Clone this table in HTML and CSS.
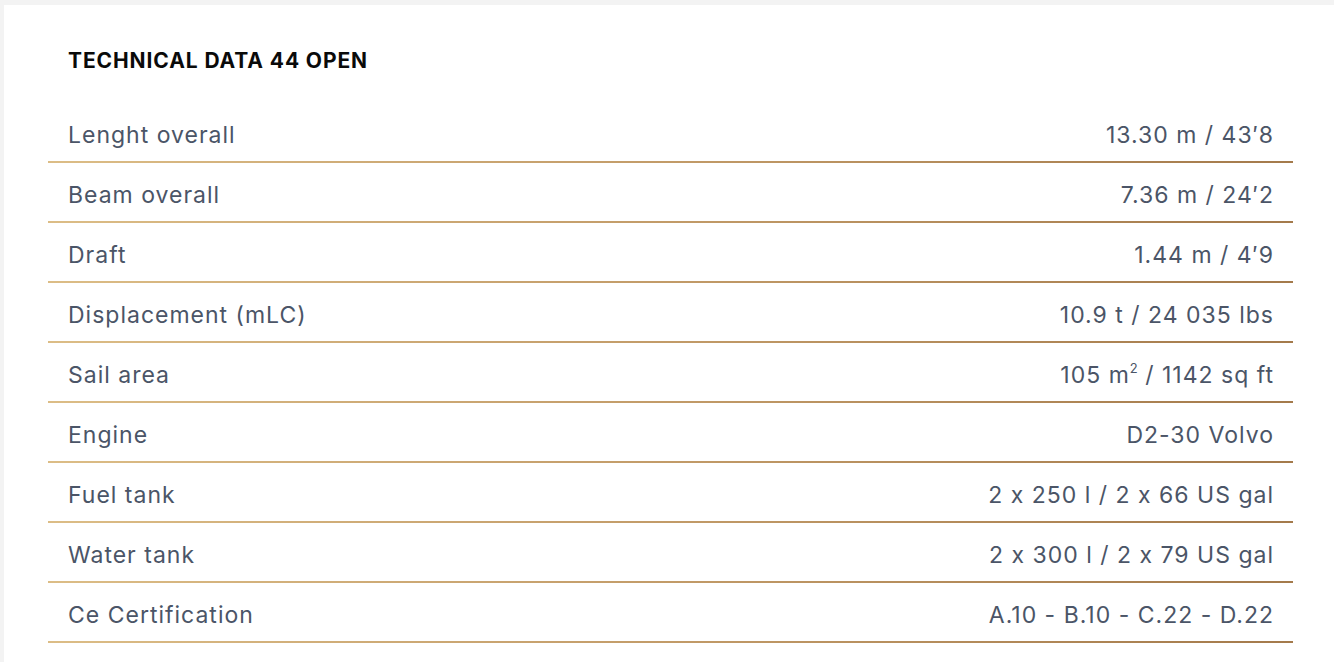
FILE: index.html
```html
<!DOCTYPE html>
<html lang="en">
<head>
<meta charset="utf-8">
<title>Technical data 44 Open</title>
<link rel="stylesheet" href="styles.css">
</head>
<body>
<section class="card">
  <h2 class="title">TECHNICAL DATA 44 OPEN</h2>
  <div class="specs">
    <div class="row"><span class="label">Lenght overall</span><span class="value">13.30 m / 43′8</span></div>
    <div class="row"><span class="label">Beam overall</span><span class="value">7.36 m / 24′2</span></div>
    <div class="row"><span class="label">Draft</span><span class="value">1.44 m / 4′9</span></div>
    <div class="row"><span class="label">Displacement (mLC)</span><span class="value">10.9 t / 24 035 lbs</span></div>
    <div class="row"><span class="label">Sail area</span><span class="value">105 m<sup class="sup">2</sup> / 1142 sq ft</span></div>
    <div class="row"><span class="label">Engine</span><span class="value">D2-30 Volvo</span></div>
    <div class="row"><span class="label">Fuel tank</span><span class="value">2 x 250 l / 2 x 66 US gal</span></div>
    <div class="row"><span class="label">Water tank</span><span class="value">2 x 300 l / 2 x 79 US gal</span></div>
    <div class="row"><span class="label">Ce Certification</span><span class="value">A.10 - B.10 - C.22 - D.22</span></div>
  </div>
</section>
</body>
</html>
```

FILE: styles.css
```css
html, body {
  margin: 0;
  padding: 0;
}
body {
  background: #f3f3f3;
  font-family: Inter, "Noto Sans", sans-serif;
  font-feature-settings: "calt" 0;
  height: 662px;
  overflow: hidden;
}
.card {
  margin: 5px 0 0 4px;
  background: #ffffff;
  padding: 44px 41px 40px 44px;
  min-height: 700px;
}
.title {
  margin: 0 0 30px 0;
  padding-left: 20px;
  font-size: 21px;
  line-height: 24px;
  font-weight: 700;
  letter-spacing: 0.9px;
  color: #0a0a0a;
}
.specs {
  display: flex;
  flex-direction: column;
}
.row {
  display: flex;
  justify-content: space-between;
  align-items: center;
  height: 60px;
  box-sizing: border-box;
  padding: 4px 19px 0 20px;
  background-image: linear-gradient(90deg, #dcbd86 0%, #c29b68 50%, #a47a4b 100%);
  background-size: 100% 2px;
  background-position: left bottom;
  background-repeat: no-repeat;
  font-size: 23px;
  font-weight: 400;
  letter-spacing: 1px;
  color: #4b5567;
}
.sup {
  font-size: 13px;
  vertical-align: 10px;
  line-height: 0;
  letter-spacing: 0;
}
```
